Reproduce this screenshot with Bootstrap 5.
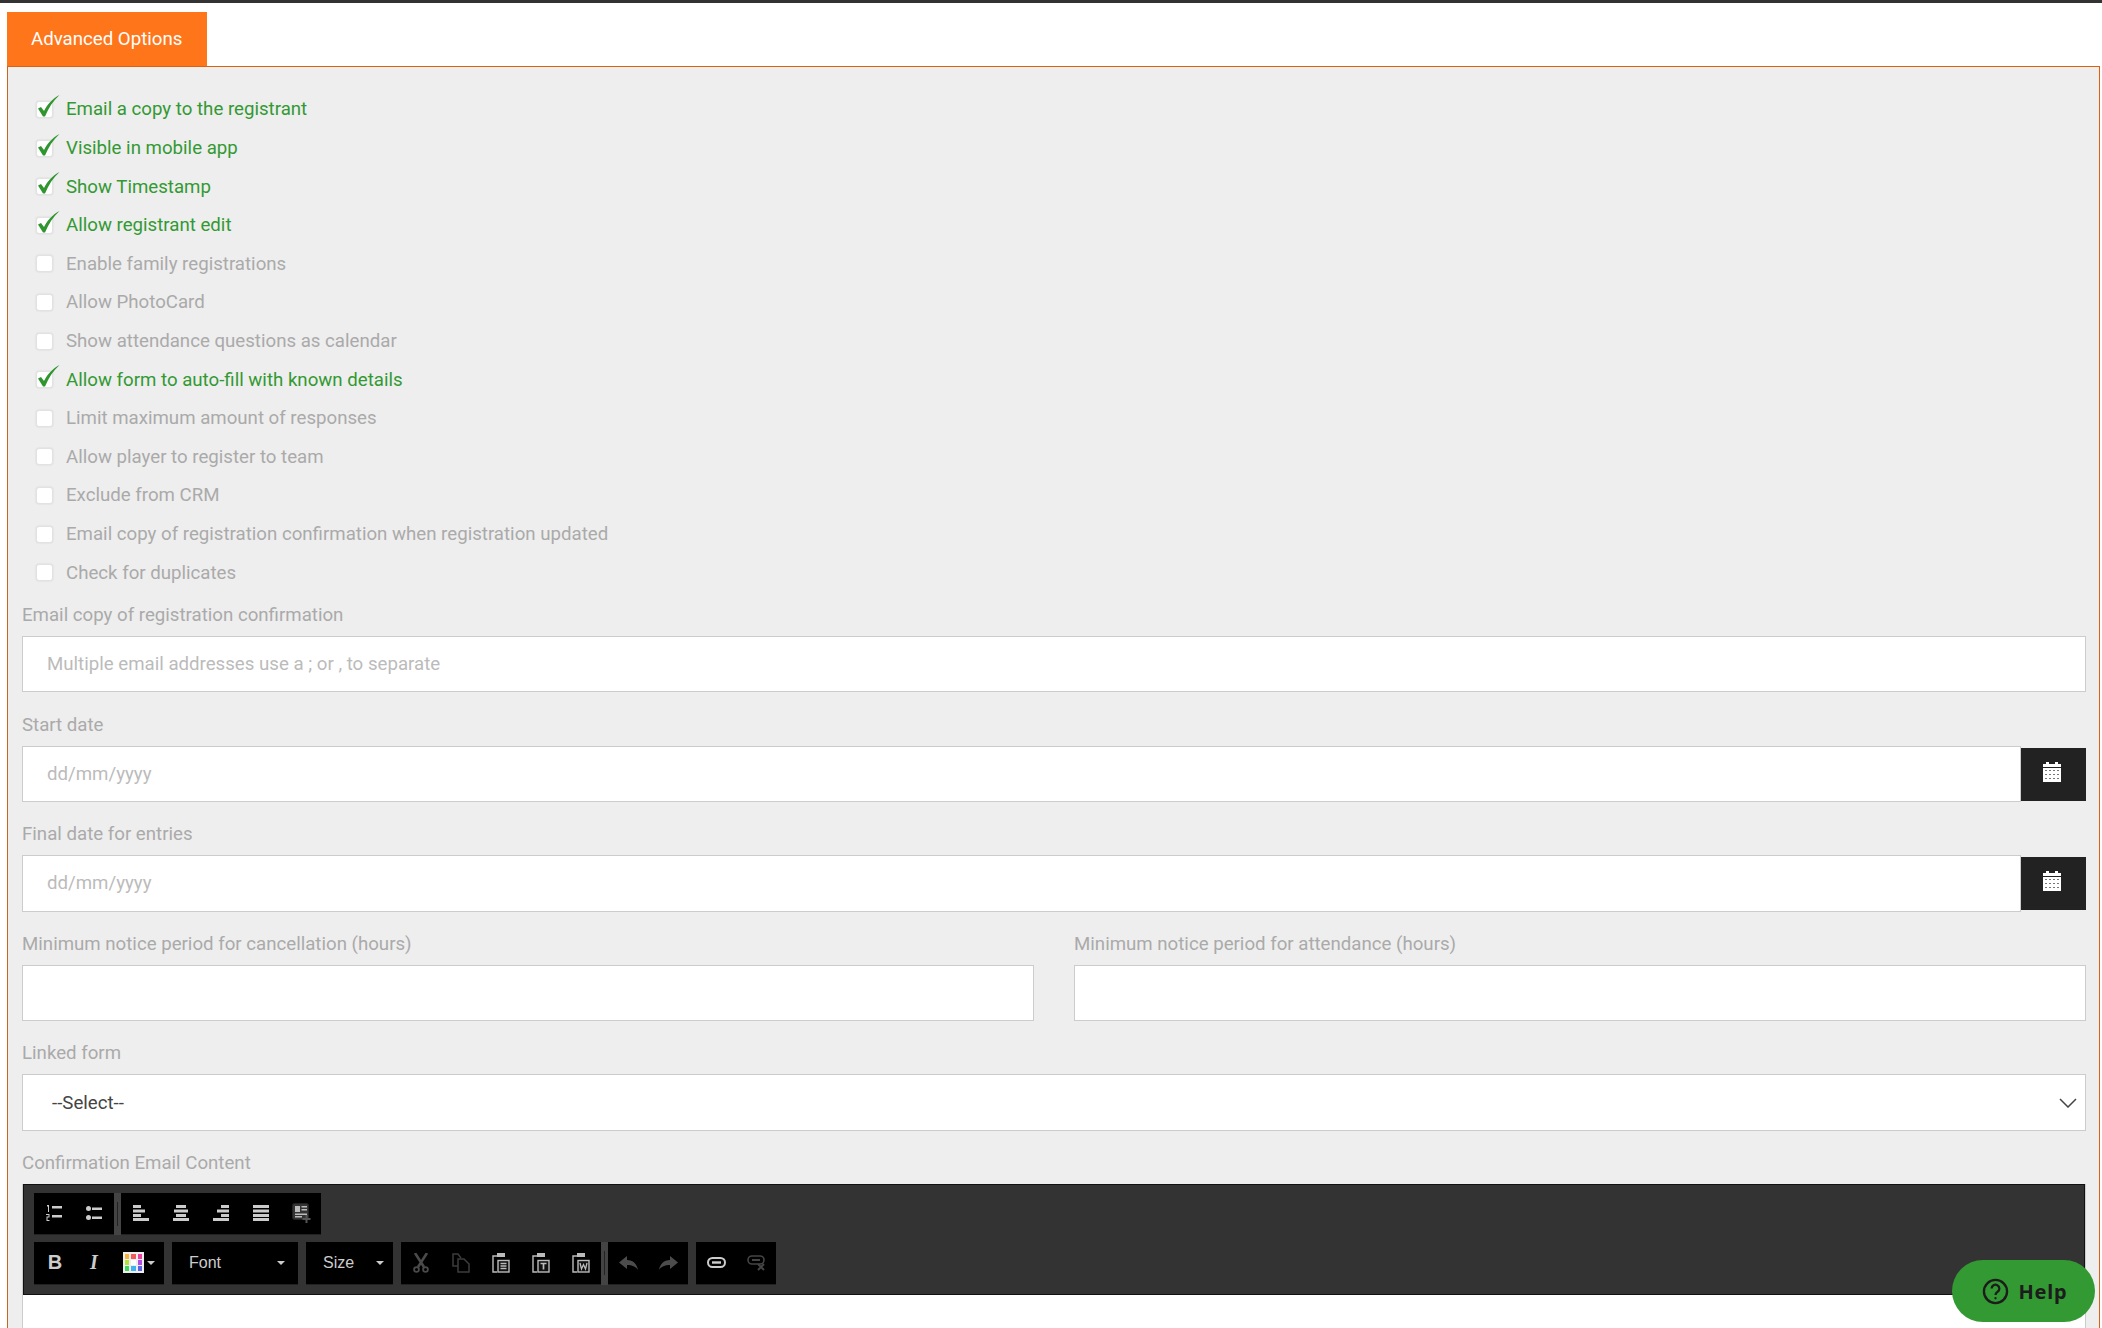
<!DOCTYPE html>
<html lang="en">
<head>
  <meta charset="UTF-8">
  <title>Advanced Options</title>
  <meta name="viewport" content="width=device-width, initial-scale=1">
  <link href="https://cdn.jsdelivr.net/npm/bootstrap@5.3.3/dist/css/bootstrap.min.css" rel="stylesheet">
  <style>
    html, body { height: 1328px; overflow: hidden; }
    body { font-family: Roboto, sans-serif; font-size: 14pt; color: #aaa; background: #fff; border-top: 3px solid #333; }
    .adv-tab { margin: 9px 0 0 7px; width: 200px; height: 54px; background: #ff7519; color: #fff; padding-left: 24px; line-height: 54px; font-size: 14pt; }
    .adv-panel { margin: 0 2px 0 7px; height: 1300px; background: #eee; border: 1px solid #e0600f; border-left-color: #c8651f; padding: 23.2px 13px 0 14px; }
    .check-row { height: 38.6px; padding-left: 14px; gap: 13px; margin: 0; }
    .check-row.is-on { color: #339933; }
    .tick-box { width: 17px; height: 17px; flex: none; background: #fff; border: 1px solid #e2e2e2; border-radius: 3px; box-shadow: 0 0 2px rgba(0,0,0,.12); position: relative; }
    .tick-box svg { position: absolute; left: 1px; top: -7px; }
    .check-list { margin-bottom: 9px; }
    .field-label { display: block; line-height: 27px; padding-top: 1px; margin-bottom: 7px; color: #aaa; }
    .field-wrap { margin-bottom: 18.1px; }
    .field-wrap .form-control, .field-wrap .form-select { height: 56.5px; border: 1px solid #ccc; border-radius: 0; font-size: 14pt; padding-left: 24px; color: #555; box-shadow: none; }
    .form-control::placeholder { color: #bbb; opacity: 1; }
    .field-wrap .form-select { padding-left: 29px; color: #444; background-image: url("data:image/svg+xml,%3csvg xmlns='http://www.w3.org/2000/svg' viewBox='0 0 18 10'%3e%3cpath fill='none' stroke='%23444' stroke-width='1.5' d='M1 1l8 8 8-8'/%3e%3c/svg%3e"); background-position: right 8px center; background-size: 18px 10px; }
    .cal-btn { width: 65px; height: 53px; margin-top: 2px; padding: 0 3px 5px 0; background: #222; display: flex; align-items: center; justify-content: center; flex: none; }
    .row-gap40 { --bs-gutter-x: 40px; }
    .wysiwyg { border: 1px solid #ccc; border-top: 0; margin-top: 3px; height: 300px; background: #fff; }
    .wys-bar { height: 111px; background: #333; border: 1px solid #111; padding: 8px 10px 0 10px; }
    .wys-row { display: flex; height: 42px; }
    .wys-row + .wys-row { height: 43px; margin-top: 7px; }
    .wys-grp { background: #000; display: flex; align-items: center; height: 100%; border-bottom: 1px solid #222; }
    .wys-grp + .wys-grp { margin-left: 8px; }
    .wys-grp.joined { margin-left: 0; }
    .wys-grip { width: 7px; background: #444; height: 100%; display: flex; align-items: center; justify-content: center; flex: none; }
    .wys-grip::before { content: ""; width: 1px; height: 24px; background: #222; }
    .wys-btn { width: 40px; height: 100%; display: flex; align-items: center; justify-content: center; flex: none; }
    .wys-bold { font: bold 20px "Liberation Sans", sans-serif; color: #ccc; padding-left: 2px; }
    .wys-ital { font: italic bold 20px "Liberation Serif", serif; color: #ccc; }
    .wys-combo { color: #ccc; font: 16px "Liberation Sans", sans-serif; display: flex; align-items: center; justify-content: space-between; }
    .combo-font { width: 126px; padding: 0 13px 0 17px; }
    .combo-size { width: 87px; padding: 0 9px 0 17px; }
    .drop-tri { width: 0; height: 0; border: 4px solid transparent; border-top-color: #ccc; border-bottom: 0; display: inline-block; }
    .help-fab { position: fixed; left: 1952px; top: 1260px; width: 143px; height: 62px; padding-left: 3px; background: #339933; color: #1c1c1c; border-radius: 31px; display: flex; align-items: center; justify-content: center; gap: 9px; font: bold 20px "Noto Sans", sans-serif; letter-spacing: .8px; }
  </style>
</head>
<body>

<div class="adv-tab">Advanced Options</div>

<div class="adv-panel">

  <div class="check-list" id="checks"></div>

  <div class="field-wrap">
    <label class="field-label">Email copy of registration confirmation</label>
    <input type="text" class="form-control" placeholder="Multiple email addresses use a ; or , to separate">
  </div>

  <div class="field-wrap">
    <label class="field-label">Start date</label>
    <div class="d-flex">
      <input type="text" class="form-control" placeholder="dd/mm/yyyy">
      <div class="cal-btn">
        <svg width="20" height="20" viewBox="0 0 20 20"><path fill="#fff" d="M4 0h3v3H4zM13 0h3v3h-3zM1 2h18v3H1zM1 6h18v14H1z"/><path fill="#777" d="M3 8h2v1H3zM7 8h2v1H7zM11 8h2v1h-2zM15 8h2v1h-2zM3 12h2v1H3zM7 12h2v1H7zM11 12h2v1h-2zM15 12h2v1h-2zM3 16h2v1H3zM7 16h2v1H7zM11 16h2v1h-2zM15 16h2v1h-2z"/></svg>
      </div>
    </div>
  </div>

  <div class="field-wrap">
    <label class="field-label">Final date for entries</label>
    <div class="d-flex">
      <input type="text" class="form-control" placeholder="dd/mm/yyyy">
      <div class="cal-btn">
        <svg width="20" height="20" viewBox="0 0 20 20"><path fill="#fff" d="M4 0h3v3H4zM13 0h3v3h-3zM1 2h18v3H1zM1 6h18v14H1z"/><path fill="#777" d="M3 8h2v1H3zM7 8h2v1H7zM11 8h2v1h-2zM15 8h2v1h-2zM3 12h2v1H3zM7 12h2v1H7zM11 12h2v1h-2zM15 12h2v1h-2zM3 16h2v1H3zM7 16h2v1H7zM11 16h2v1h-2zM15 16h2v1h-2z"/></svg>
      </div>
    </div>
  </div>

  <div class="row row-gap40">
    <div class="col-6 field-wrap">
      <label class="field-label">Minimum notice period for cancellation (hours)</label>
      <input type="text" class="form-control">
    </div>
    <div class="col-6 field-wrap">
      <label class="field-label">Minimum notice period for attendance (hours)</label>
      <input type="text" class="form-control">
    </div>
  </div>

  <div class="field-wrap">
    <label class="field-label">Linked form</label>
    <select class="form-select"><option>--Select--</option></select>
  </div>

  <label class="field-label">Confirmation Email Content</label>
  <div class="wysiwyg">
    <div class="wys-bar">
      <div class="wys-row">
        <div class="wys-grp">
          <div class="wys-btn"><svg width="16" height="16" viewBox="0 0 16 16" fill="#ccc"><path d="M1 0h2v7H2V1.500H1zM0 9h3.500v3.500H1.500V15h2v1H.500v-4.500h2V10H0zM6 1h10v2.500H6zM6 10h10v2.500H6z"/></svg></div>
          <div class="wys-btn"><svg width="16" height="14" viewBox="0 0 16 14" fill="#ccc"><circle cx="2.500" cy="2.500" r="2.500"/><circle cx="2.500" cy="11.500" r="2.500"/><path d="M6 1.500h10V4H6zM6 10.500h10V13H6z"/></svg></div>
        </div>
        <div class="wys-grip"></div>
        <div class="wys-grp joined">
          <div class="wys-btn"><svg width="16" height="16" viewBox="0 0 16 16" fill="#ccc"><path d="M0 0h8v3H0zM0 4.500h12v3H0zM0 9h8v3H0zM0 13h16v3H0z"/></svg></div>
          <div class="wys-btn"><svg width="16" height="16" viewBox="0 0 16 16" fill="#ccc"><path d="M3 0h10v3H3zM1 4.500h14v3H1zM3 9h10v3H3zM0 13h16v3H0z"/></svg></div>
          <div class="wys-btn"><svg width="16" height="16" viewBox="0 0 16 16" fill="#ccc"><path d="M8 0h8v3H8zM4 4.500h12v3H4zM8 9h8v3H8zM0 13h16v3H0z"/></svg></div>
          <div class="wys-btn"><svg width="16" height="16" viewBox="0 0 16 16" fill="#ccc"><path d="M0 0h16v3H0zM0 4.500h16v3H0zM0 9h16v3H0zM0 13h16v3H0z"/></svg></div>
          <div class="wys-btn"><svg width="19" height="20" viewBox="0 0 19 20"><rect x=".5" y=".5" width="16" height="16" rx="2" fill="#333" stroke="#222"/><path fill="#bbb" d="M3 3h5v6H3zM9.500 3H15v1.500H9.500zM9.500 6H15v1.500H9.500zM3 10.500h12V12H3zM3 13h7v1.500H3z"/><path fill="#555" d="M13.500 12h2v3h3v2h-3v3h-2v-3h-3v-2h3z"/></svg></div>
        </div>
      </div>
      <div class="wys-row">
        <div class="wys-grp">
          <div class="wys-btn wys-bold">B</div>
          <div class="wys-btn wys-ital">I</div>
          <div class="wys-btn" style="width:50px;justify-content:flex-start;padding-left:9px;gap:3px">
            <svg width="21" height="21" viewBox="0 0 21 21"><rect width="21" height="21" fill="#eee"/><path fill="#f9b233" d="M2 2h4v5H2z"/><path fill="#f35b5b" d="M8 2h5v5H8z"/><path fill="#ee3fa0" d="M15 2h4v5h-4z"/><path fill="#b4e23c" d="M2 8h4v5H2z"/><path fill="#fff" d="M8 8h5v5H8z"/><path fill="#b14ee6" d="M15 8h4v5h-4z"/><path fill="#3fd65a" d="M2 14h4v5H2z"/><path fill="#3fb4ee" d="M8 14h5v5H8z"/><path fill="#5a62e6" d="M15 14h4v5h-4z"/></svg>
            <span class="drop-tri"></span>
          </div>
        </div>
        <div class="wys-grp wys-combo combo-font">Font <span class="drop-tri"></span></div>
        <div class="wys-grp wys-combo combo-size">Size <span class="drop-tri"></span></div>
        <div class="wys-grp">
          <div class="wys-btn"><svg width="16" height="20" viewBox="0 0 16 20" fill="none" stroke="#4a4a4a" stroke-width="2.600"><path d="M2 0l9 14M14 0L5 14"/><circle cx="3.500" cy="16.500" r="2.400" stroke-width="1.800"/><circle cx="12.500" cy="16.500" r="2.400" stroke-width="1.800"/></svg></div>
          <div class="wys-btn"><svg width="18" height="20" viewBox="0 0 18 20" fill="none" stroke="#3c3c3c" stroke-width="1.500"><path d="M6 13H1V1h5l3 4"/><path d="M6 6h6l5 5v8H6z"/></svg></div>
          <div class="wys-btn"><svg width="18" height="20" viewBox="0 0 18 20" fill="none" stroke="#bbb" stroke-width="1.400"><path d="M5 3H1v16h4"/><path fill="#bbb" stroke="none" d="M5 0h8v4H5z"/><rect x="6" y="7.500" width="11" height="11.500" fill="#111"/><path stroke-width="1.500" d="M8.500 10.500h6M8.500 13h6M8.500 15.500h6"/></svg></div>
          <div class="wys-btn"><svg width="18" height="20" viewBox="0 0 18 20" fill="none" stroke="#bbb" stroke-width="1.400"><path d="M5 3H1v16h4"/><path fill="#bbb" stroke="none" d="M5 0h8v4H5z"/><rect x="6" y="7.500" width="11" height="11.500" fill="#111"/><path stroke-width="1.700" d="M8.500 10.500h6M11.500 10.500v6"/></svg></div>
          <div class="wys-btn"><svg width="18" height="20" viewBox="0 0 18 20" fill="none" stroke="#bbb" stroke-width="1.400"><path d="M5 3H1v16h4"/><path fill="#bbb" stroke="none" d="M5 0h8v4H5z"/><rect x="6" y="7.500" width="11" height="11.500" fill="#111"/><path stroke-width="1.300" d="M8 10l1.500 6 2-4.500 2 4.500 1.500-6"/></svg></div>
        </div>
        <div class="wys-grip"></div>
        <div class="wys-grp joined">
          <div class="wys-btn"><svg width="19" height="14" viewBox="0 0 19 14"><path fill="#4c4c4c" d="M8 0v4c6 0 10 4 11 10-2-3.500-6-5-11-5v4L0 6.500z"/></svg></div>
          <div class="wys-btn"><svg width="19" height="14" viewBox="0 0 19 14"><path fill="#4c4c4c" d="M11 0v4C5 4 1 8 0 14c2-3.500 6-5 11-5v4l8-6.500z"/></svg></div>
        </div>
        <div class="wys-grp">
          <div class="wys-btn"><svg width="19" height="11" viewBox="0 0 19 11" fill="none" stroke="#ccc" stroke-width="2"><rect x="1" y="1" width="17" height="9" rx="4.500"/><path stroke-width="2.400" d="M5 5.500h9"/></svg></div>
          <div class="wys-btn"><svg width="19" height="16" viewBox="0 0 19 16" fill="none" stroke="#444" stroke-width="1.600"><rect x="1" y="1" width="16" height="8" rx="4"/><path stroke-width="2" d="M5 5h8"/><path stroke-width="2" d="M11 9l6 6M17 9l-6 6"/></svg></div>
        </div>
      </div>
    </div>
  </div>
</div>

<div class="help-fab">
  <svg width="27" height="27" viewBox="0 0 28 28" fill="none" stroke="#1c1c1c" stroke-width="2.400"><circle cx="14" cy="14" r="12"/><path d="M10 11a4 4 0 1 1 6.200 3.300c-1.500 1-2.200 1.600-2.200 3.200"/><circle cx="14" cy="21" r="1.200" fill="#1c1c1c" stroke="none"/></svg>
  <span>Help</span>
</div>

<script src="https://cdn.jsdelivr.net/npm/bootstrap@5.3.3/dist/js/bootstrap.bundle.min.js"></script>
<script>
  // option rows: [label, ticked]
  const options = [
    ["Email a copy to the registrant", true],
    ["Visible in mobile app", true],
    ["Show Timestamp", true],
    ["Allow registrant edit", true],
    ["Enable family registrations", false],
    ["Allow PhotoCard", false],
    ["Show attendance questions as calendar", false],
    ["Allow form to auto-fill with known details", true],
    ["Limit maximum amount of responses", false],
    ["Allow player to register to team", false],
    ["Exclude from CRM", false],
    ["Email copy of registration confirmation when registration updated", false],
    ["Check for duplicates", false]
  ];
  const tick = '<svg width="22" height="22" viewBox="0 0 22 22"><path fill="#2f962f" d="M0 13.500l3-1.500 3 4C9 10 14 4 21.500 0 15 6 10.500 13 7 21.500H5z"/></svg>';
  document.getElementById("checks").innerHTML = options.map(([text, on]) =>
    `<div class="check-row d-flex align-items-center ${on ? "is-on" : ""}"><span class="tick-box">${on ? tick : ""}</span><span>${text}</span></div>`
  ).join("");
</script>

</body>
</html>
